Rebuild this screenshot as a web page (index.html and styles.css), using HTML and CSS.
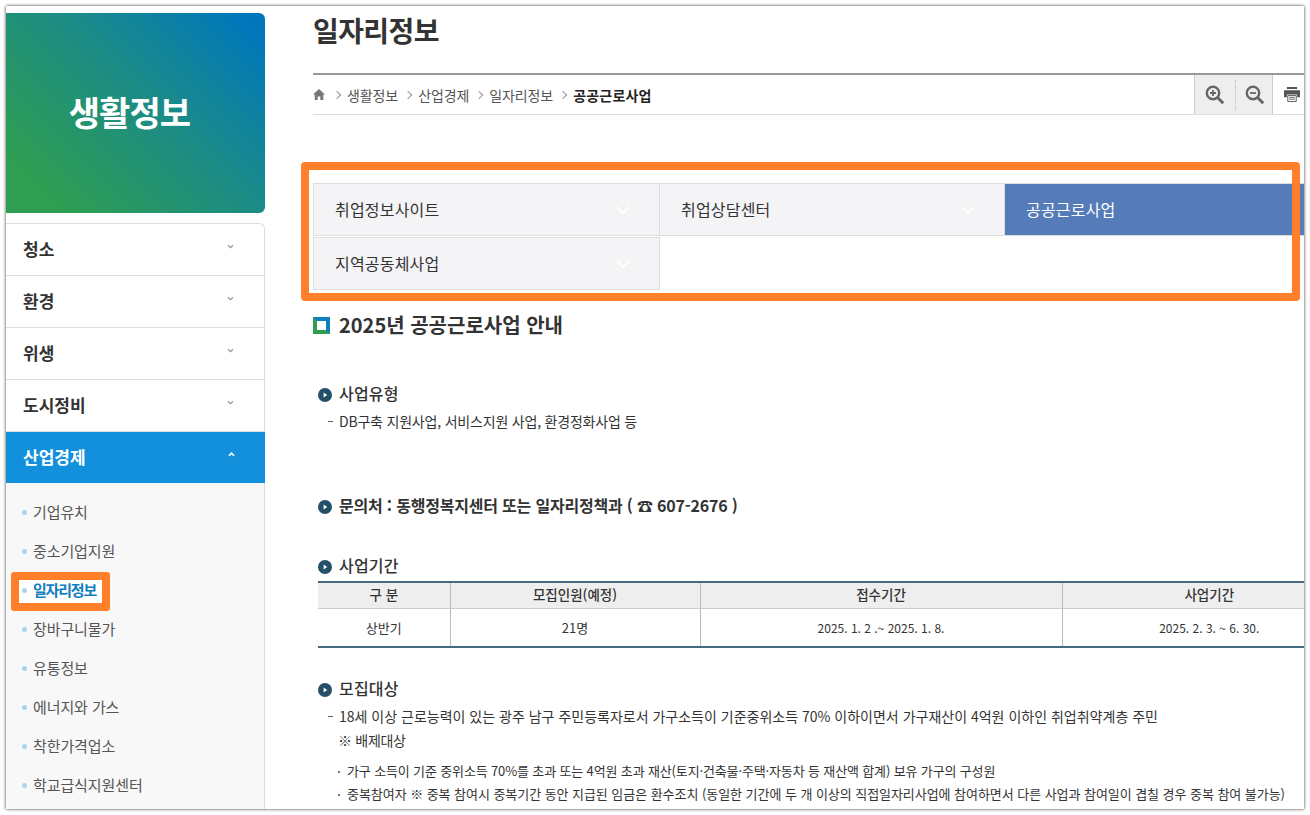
FILE: index.html
```html
<!DOCTYPE html>
<html lang="ko">
<head>
<meta charset="utf-8">
<title>일자리정보</title>
<link rel="stylesheet" href="styles.css">
</head>
<body>
<div class="window">
  <aside class="sidebar">
    <div class="banner"><h2>생활정보</h2></div>
    <ul class="menu">
      <li class="menu-row"><span>청소</span><svg class="chev" viewBox="0 0 8 6"><path d="M1 1.5l3 3 3-3"/></svg></li>
      <li class="menu-row"><span>환경</span><svg class="chev" viewBox="0 0 8 6"><path d="M1 1.5l3 3 3-3"/></svg></li>
      <li class="menu-row"><span>위생</span><svg class="chev" viewBox="0 0 8 6"><path d="M1 1.5l3 3 3-3"/></svg></li>
      <li class="menu-row"><span>도시정비</span><svg class="chev" viewBox="0 0 8 6"><path d="M1 1.5l3 3 3-3"/></svg></li>
      <li class="menu-row active"><span>산업경제</span><svg class="chev" viewBox="0 0 8 6"><path d="M1 4.5l3-3 3 3"/></svg></li>
    </ul>
    <ul class="submenu">
      <li><i></i>기업유치</li>
      <li><i></i>중소기업지원</li>
      <li class="current"><div class="mark"><i></i>일자리정보</div></li>
      <li><i></i>장바구니물가</li>
      <li><i></i>유통정보</li>
      <li><i></i>에너지와 가스</li>
      <li><i></i>착한가격업소</li>
      <li><i></i>학교급식지원센터</li>
    </ul>
  </aside>
  <main class="main">
    <h1 class="title">일자리정보</h1>
    <div class="crumbs">
      <svg class="home" viewBox="0 0 12 11"><path d="M6 0L0 5.6h1.7V11h3V7.4h2.6V11h3V5.6H12z"/></svg>
      <span class="sep"></span><span>생활정보</span>
      <span class="sep"></span><span>산업경제</span>
      <span class="sep"></span><span>일자리정보</span>
      <span class="sep"></span><b>공공근로사업</b>
      <div class="tools">
        <div class="zoombox">
          <svg viewBox="0 0 20 20"><circle cx="8" cy="8" r="6.2"/><path class="h" d="M12.8 12.8l5.4 5.4"/><path class="t" d="M5 8h6M8 5v6"/></svg>
          <span class="dots"></span>
          <svg viewBox="0 0 20 20"><circle cx="8" cy="8" r="6.2"/><path class="h" d="M12.8 12.8l5.4 5.4"/><path class="t" d="M5 8h6"/></svg>
        </div>
        <svg class="print" viewBox="0 0 17 16"><path d="M3 0h11v2H3zM0 3.5h17V11h-3V8H3v3H0z" fill="#555"/><path d="M4 9h9v6.5H4z" fill="#fff" stroke="#555"/><path d="M5.5 11h6M5.5 13h6" stroke="#555"/></svg>
      </div>
    </div>
    <div class="tabs">
      <div class="tab">취업정보사이트<svg class="tchev" viewBox="0 0 14 8"><path d="M1 1l6 6 6-6"/></svg></div>
      <div class="tab">취업상담센터<svg class="tchev" viewBox="0 0 14 8"><path d="M1 1l6 6 6-6"/></svg></div>
      <div class="tab on">공공근로사업</div>
      <div class="tab">지역공동체사업<svg class="tchev" viewBox="0 0 14 8"><path d="M1 1l6 6 6-6"/></svg></div>
    </div>
    <div class="callout"></div>
    <h3 class="sec"><i></i>2025년 공공근로사업 안내</h3>

    <h4 class="h1st"><svg class="play" viewBox="0 0 14 14"><circle cx="7" cy="7" r="7"/><path d="M5.6 4.6l3.6 2.4-3.6 2.4z"/></svg>사업유형</h4>
    <p class="dash tight">DB구축 지원사업, 서비스지원 사업, 환경정화사업 등</p>

    <h4 class="h2nd"><svg class="play" viewBox="0 0 14 14"><circle cx="7" cy="7" r="7"/><path d="M5.6 4.6l3.6 2.4-3.6 2.4z"/></svg>문의처 : 동행정복지센터 또는 일자리정책과 ( ☎ 607-2676 )</h4>

    <h4 class="h3rd"><svg class="play" viewBox="0 0 14 14"><circle cx="7" cy="7" r="7"/><path d="M5.6 4.6l3.6 2.4-3.6 2.4z"/></svg>사업기간</h4>
    <table class="grid">
      <colgroup><col class="c1"><col class="c2"><col class="c3"><col class="c4"></colgroup>
      <thead><tr><th>구 분</th><th>모집인원(예정)</th><th>접수기간</th><th>사업기간</th></tr></thead>
      <tbody><tr><td class="ko">상반기</td><td class="ko">21명</td><td>2025. 1. 2 .~ 2025. 1. 8.</td><td>2025. 2. 3. ~ 6. 30.</td></tr></tbody>
    </table>

    <h4 class="h4th"><svg class="play" viewBox="0 0 14 14"><circle cx="7" cy="7" r="7"/><path d="M5.6 4.6l3.6 2.4-3.6 2.4z"/></svg>모집대상</h4>
    <p class="dash">18세 이상 근로능력이 있는 광주 남구 주민등록자로서 가구소득이 기준중위소득 70% 이하이면서 가구재산이 4억원 이하인 취업취약계층 주민</p>
    <p class="note">※ 배제대상</p>
    <p class="dot first">가구 소득이 기준 중위소득 70%를 초과 또는 4억원 초과 재산(토지·건축물·주택·자동차 등 재산액 합계) 보유 가구의 구성원</p>
    <p class="dot">중복참여자 ※ 중복 참여시 중복기간 동안 지급된 임금은 환수조치 (동일한 기간에 두 개 이상의 직접일자리사업에 참여하면서 다른 사업과 참여일이 겹칠 경우 중복 참여 불가능)</p>
  </main>
</div>
</body>
</html>
```
FILE: styles.css
```css
* { box-sizing: border-box; }
html, body { margin: 0; height: 815px; overflow: hidden; background: #fff; }
body { font-family: "Noto Sans CJK KR", "Noto Sans", sans-serif; color: #333; }
h1, h2, h3, h4, p, ul { margin: 0; padding: 0; }
ul { list-style: none; }

.window {
  margin: 6px 0 0 6px; width: 1298px; height: 803px; background: #fff;
  box-shadow: 0 0 3px rgba(0,0,0,.8); overflow: hidden; display: flex; position: relative;
}
.sidebar { width: 259px; flex: none; padding-top: 7px; display: flex; flex-direction: column; }
.banner {
  height: 200px; border-radius: 0 6px 6px 0; display: flex; align-items: center; justify-content: center; padding-right: 12px;
  background: linear-gradient(45deg, #2f9e50 12%, #1c8c85 55%, #0077bd 95%);
}
.banner h2 { color: #fff; font-size: 34px; font-weight: 700; line-height: 1; letter-spacing: -.9px; margin-top: -3px; }
.menu { margin-top: 10px; border: 1px solid #ddd; border-left: 0; border-bottom: 0; border-radius: 0 6px 0 0; }
.menu-row {
  height: 52px; border-bottom: 1px solid #ddd; display: flex; align-items: center; justify-content: space-between;
  padding: 0 30px 0 17px; font-size: 17px; font-weight: 700; color: #333;
}
.menu-row span { margin-top: -2px; }
.chev { width: 7px; height: 5px; margin-top: -6px; fill: none; stroke: #8a9aa5; stroke-width: 1.4; }
.menu-row.active { height: 51px; background: #1390db; color: #fff; border-bottom: 0; margin-right: -1px; }
.active .chev { stroke: #fff; stroke-width: 2; }
.submenu {
  flex: 1; background: #f8f8f8; border-right: 1px solid #ddd; padding: 9px 0 0 5px;
  font-size: 15px; color: #555; letter-spacing: -.1px;
}
.submenu li { height: 39px; display: flex; align-items: center; padding-left: 11px; }
.submenu i { width: 5px; height: 5px; border-radius: 50%; background: #a9d5ee; margin: 2px 6px 0 0; flex: none; }
.submenu li.current { padding-left: 0; }
.mark {
  height: 39px; width: 99px; border: 8px solid #ff7f2a; border-radius: 3px; background: #fff; padding: 0 0 4px 3px;
  align-self: flex-start; margin-top: 2px;
  display: flex; align-items: center; font-weight: 700; color: #0f7dc2; white-space: nowrap; letter-spacing: -1.2px;
}

.main { flex: 1; min-width: 0; padding-left: 48px; position: relative; }
.title { font-size: 28px; font-weight: 700; color: #333; line-height: 40px; height: 67px; padding-top: 4px; letter-spacing: -.6px; }
.crumbs {
  height: 42px; border-top: 2px solid #999; border-bottom: 1px solid #ddd; display: flex; align-items: center;
  font-size: 14px; color: #555; letter-spacing: -.1px;
}
.crumbs b { color: #222; font-weight: 700; font-size: 14px; letter-spacing: .2px; }
.home { width: 12px; height: 11px; fill: #777; flex: none; margin-right: 2px; }
.sep { width: 6px; height: 6px; border-top: 1px solid #999; border-right: 1px solid #999; transform: rotate(45deg); margin: 0 7px 0 7px; flex: none; }
.tools { margin-left: auto; display: flex; align-items: center; height: 100%; width: 110px; flex: none; }
.zoombox {
  width: 79px; height: 100%; background: #eee; border-left: 1px solid #ccc; border-right: 1px solid #ccc;
  display: flex; align-items: center; justify-content: space-between; flex: none; padding: 0 7px 0 10px;
}
.zoombox svg { width: 20px; height: 20px; fill: none; stroke: #666; }
.zoombox circle { stroke-width: 2.4; }
.zoombox .h { stroke-width: 3; }
.zoombox .t { stroke-width: 1.8; }
.dots { height: 30px; border-left: 1px dotted #bbb; }
.print { width: 16px; height: 15px; margin-left: 11px; flex: none; }

.tabs { margin-top: 68px; width: 1040px; display: grid; grid-template-columns: 347px 345px 348px; grid-auto-rows: 53px; row-gap: 1px; font-size: 16px; color: #333; letter-spacing: .2px; }
.tab {
  background: #f4f4f6; border: 1px solid #ddd; border-left: 0; padding: 0 21px 2px; display: flex; align-items: center; justify-content: space-between;
}
.tab:first-child, .tab:nth-child(4) { border-left: 1px solid #ddd; }
.tab.on { background: #557cb9; color: #fff; border-right: 0; border-bottom: 1px solid #ddd; }
.tchev { width: 14px; height: 8px; fill: none; stroke: #fff; stroke-width: 2; flex: none; margin: 2px 8px 0 0; }
.callout {
  position: absolute; left: 36px; top: 156px; width: 999px; height: 139px;
  border: 8px solid #ff7f2a; border-radius: 4px; pointer-events: none;
}
.sec { margin-top: 21px; font-size: 20px; font-weight: 700; line-height: 28px; height: 28px; display: flex; align-items: center; color: #333; }
.sec i { width: 17px; height: 17px; border: 4px solid; border-color: #0f7fbd #0f7fbd #2f9e50 #2f9e50; margin-right: 9px; flex: none; background: #fff; }

.h1st, .h2nd, .h3rd, .h4th { font-size: 16px; font-weight: 500; line-height: 24px; height: 24px; display: flex; align-items: center; color: #333; margin-left: 5px; white-space: nowrap; letter-spacing: .2px; }
.play { width: 14px; height: 14px; margin-right: 7px; margin-top: 3px; flex: none; }
.play circle { fill: #234f68; }
.play path { fill: #fff; }
.h1st { margin-top: 42px; }
.h2nd { margin-top: 62px; font-weight: 600; letter-spacing: -.2px; }
.h3rd { margin-top: 36px; }
.h4th { margin-top: 28px; }

.dash { font-size: 14px; line-height: 20px; margin: 6px 0 0 26px; color: #333; position: relative; white-space: nowrap; }
.dash.tight { letter-spacing: -.2px; }
.dash::before { content: ""; position: absolute; left: -11px; top: 10px; width: 5px; height: 1px; background: #456a82; }
.note { font-size: 14px; line-height: 20px; margin: 4px 0 0 25px; color: #333; letter-spacing: -.3px; }
.dot { font-size: 13px; line-height: 20px; margin: 3px 0 0 34px; color: #333; position: relative; white-space: nowrap; letter-spacing: -.05px; }
.dot.first { margin-top: 11px; letter-spacing: -.14px; }
.dot::before { content: ""; position: absolute; left: -9px; top: 10px; width: 2px; height: 2px; background: #777; }

.grid { margin: 4px 0 0 5px; width: 1038px; table-layout: fixed; border-collapse: collapse; border-top: 2px solid #456a82; border-bottom: 2px solid #456a82; font-size: 12px; color: #333; text-align: center; }
.c1 { width: 132px; } .c2 { width: 250px; } .c3 { width: 362px; } .c4 { width: 294px; }
.grid th { height: 26px; padding: 0 0 2px; background: #eee; font-weight: 500; font-size: 13.5px; border-left: 1px solid #bbb; border-bottom: 1px solid #ccc; }
.grid td { height: 39px; padding: 0; border-left: 1px solid #bbb; }
.grid td.ko { font-size: 13px; }
.grid th:first-child, .grid td:first-child { border-left: 0; }
```
